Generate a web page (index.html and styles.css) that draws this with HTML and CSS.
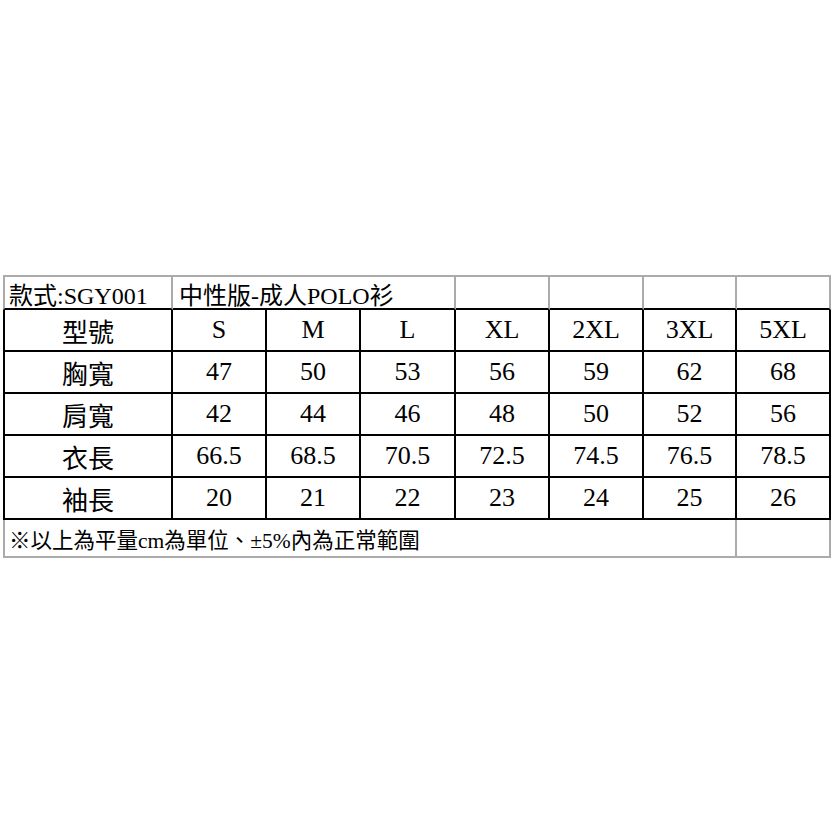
FILE: index.html
```html
<!DOCTYPE html>
<html lang="zh-Hant">
<head>
<meta charset="utf-8">
<title>尺寸表</title>
<link rel="stylesheet" href="styles.css">
</head>
<body>
<div class="sheet">
  <div class="c top first left">款式:SGY001</div>
  <div class="c top span3 left">中性版-成人POLO衫</div>
  <div class="c top"></div>
  <div class="c top"></div>
  <div class="c top"></div>
  <div class="c top"></div>

  <div class="c b first">型號</div>
  <div class="c b">S</div>
  <div class="c b">M</div>
  <div class="c b">L</div>
  <div class="c b">XL</div>
  <div class="c b">2XL</div>
  <div class="c b">3XL</div>
  <div class="c b">5XL</div>

  <div class="c b first">胸寬</div>
  <div class="c b">47</div>
  <div class="c b">50</div>
  <div class="c b">53</div>
  <div class="c b">56</div>
  <div class="c b">59</div>
  <div class="c b">62</div>
  <div class="c b">68</div>

  <div class="c b first">肩寬</div>
  <div class="c b">42</div>
  <div class="c b">44</div>
  <div class="c b">46</div>
  <div class="c b">48</div>
  <div class="c b">50</div>
  <div class="c b">52</div>
  <div class="c b">56</div>

  <div class="c b first">衣長</div>
  <div class="c b">66.5</div>
  <div class="c b">68.5</div>
  <div class="c b">70.5</div>
  <div class="c b">72.5</div>
  <div class="c b">74.5</div>
  <div class="c b">76.5</div>
  <div class="c b">78.5</div>

  <div class="c b first">袖長</div>
  <div class="c b">20</div>
  <div class="c b">21</div>
  <div class="c b">22</div>
  <div class="c b">23</div>
  <div class="c b">24</div>
  <div class="c b">25</div>
  <div class="c b">26</div>

  <div class="c note first span7 left">※以上為平量cm為單位、±5%內為正常範圍</div>
  <div class="c note"></div>
</div>
</body>
</html>
```

FILE: styles.css
```css
html, body {
  margin: 0;
  padding: 0;
  background: #ffffff;
}

body {
  width: 836px;
  height: 836px;
  font-family: "Liberation Serif", "Noto Sans CJK TC", serif;
  color: #000;
}

.sheet {
  display: grid;
  grid-template-columns: 170px 94px 94px 95px 94px 94px 93px 94px;
  grid-template-rows: 35px 42px 42px 42px 42px 42px 38px;
  margin: 275px 0 0 3px;
  width: 828px;
}

.c {
  box-sizing: border-box;
  display: flex;
  align-items: center;
  justify-content: center;
  white-space: nowrap;
}

.top {
  border-top: 2px solid #ababab;
  border-right: 2px solid #ababab;
  border-bottom: 2px solid #000;
  font-size: 24px;
  padding-top: 1px;
}

.top.first {
  border-left: 2px solid #ababab;
}

.b {
  border-right: 2px solid #000;
  border-bottom: 2px solid #000;
  font-size: 26px;
}

.b.first {
  border-left: 2px solid #000;
}

.note {
  border-right: 2px solid #ababab;
  border-bottom: 2px solid #ababab;
  font-size: 21.5px;
}

.note.first {
  border-left: 2px solid #ababab;
}

.left {
  justify-content: flex-start;
  padding-left: 4px;
}

.span3 {
  grid-column: span 3;
  padding-left: 6px;
}

.span7 {
  grid-column: span 7;
}
```
